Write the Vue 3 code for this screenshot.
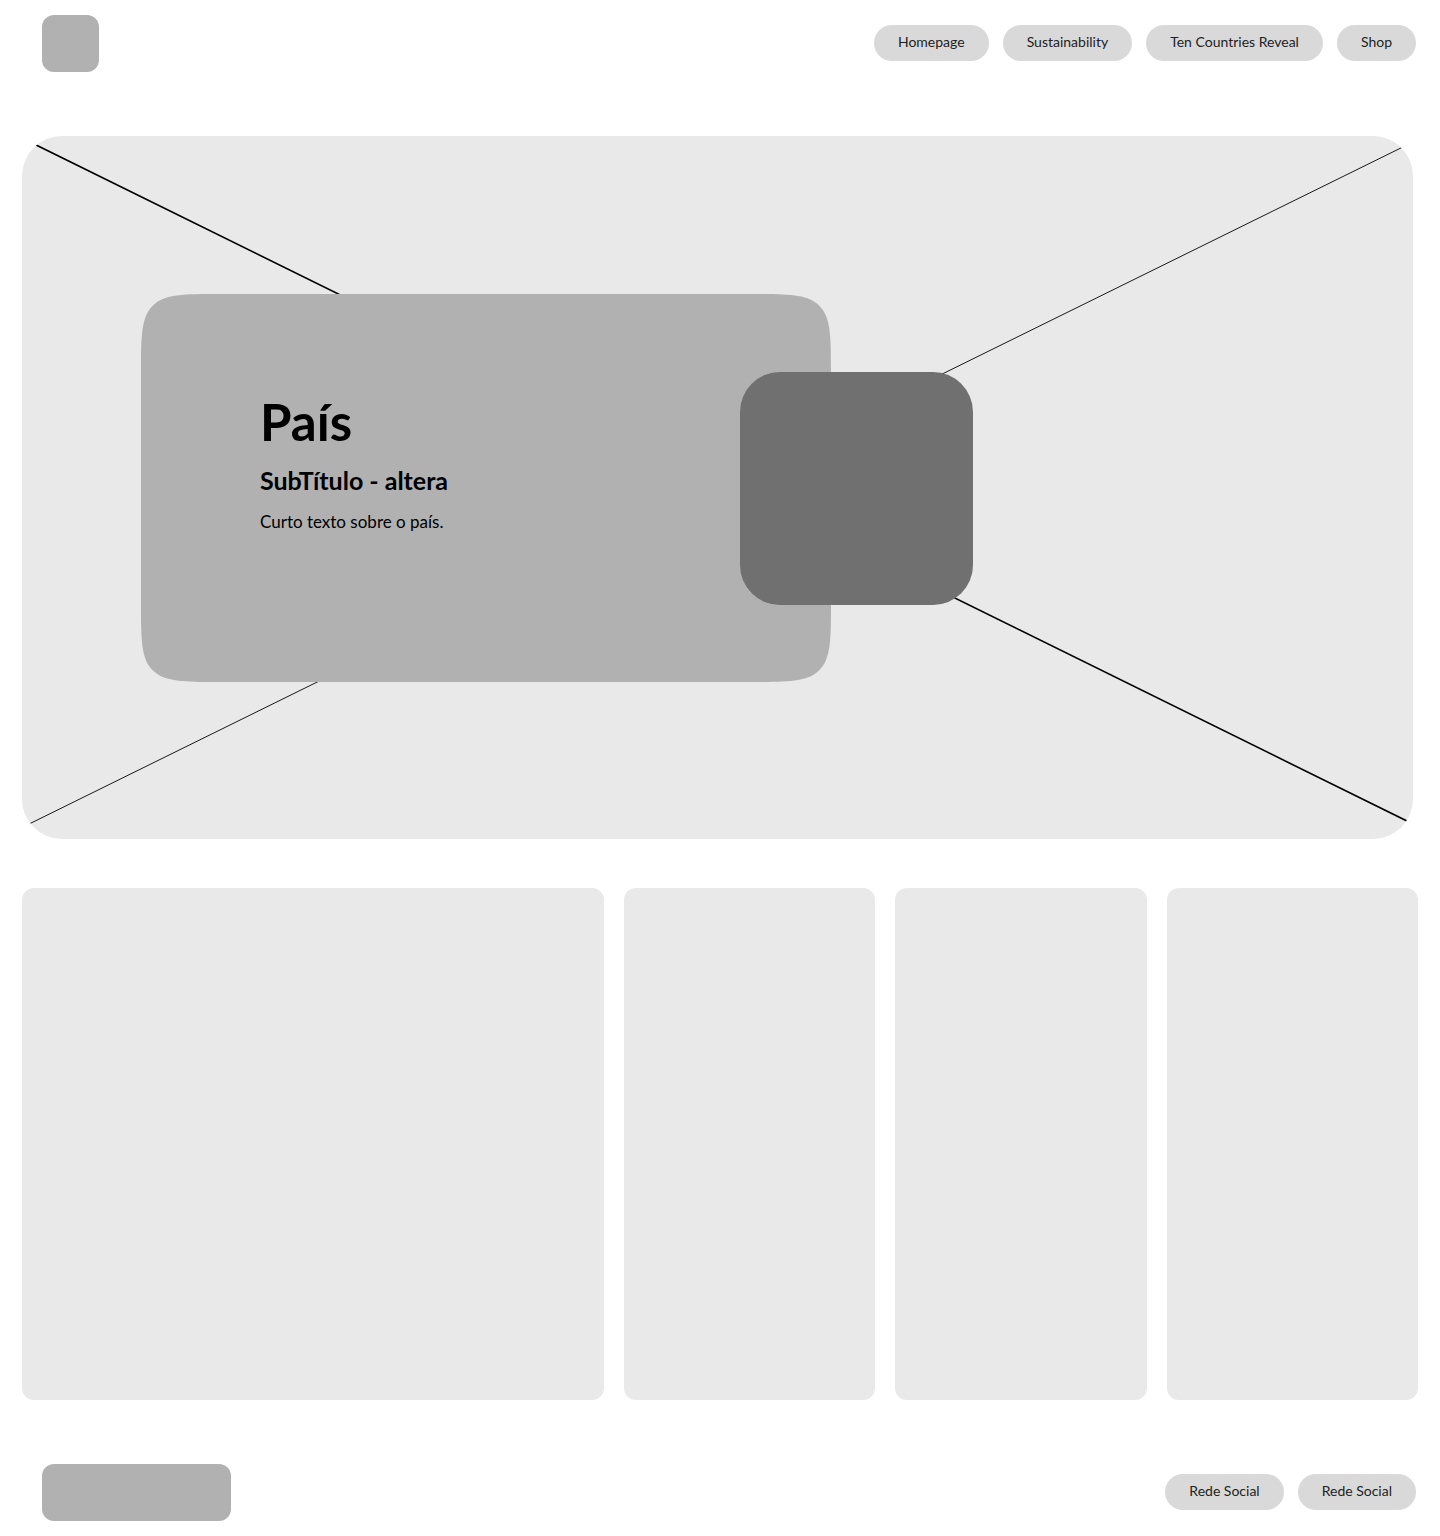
<script setup>
const pages = ['Homepage', 'Sustainability', 'Ten Countries Reveal', 'Shop']
const socials = ['Rede Social', 'Rede Social']
</script>

<template>
  <div class="page">
    <header class="bar header">
      <div class="logo"></div>
      <nav class="links" aria-label="Principal">
        <a v-for="page in pages" :key="page" class="pill" href="#">{{ page }}</a>
      </nav>
    </header>

    <main>
      <section class="hero">
        <svg class="cross" viewBox="0 0 1391 703" preserveAspectRatio="none" aria-hidden="true">
          <line x1="0" y1="2" x2="1391" y2="688" stroke-width="1.6" />
          <line x1="0" y1="691.5" x2="1391" y2="6" stroke-width="0.9" />
        </svg>
        <div class="panel">
          <svg class="shape" viewBox="0 0 690 388" preserveAspectRatio="none" aria-hidden="true">
            <path
              d="M0 80C0 42.3 0 23.4 11.7 11.7C23.4 0 42.3 0 80 0H610C647.7 0 666.6 0 678.3 11.7C690 23.4 690 42.3 690 80V308C690 345.7 690 364.6 678.3 376.3C666.6 388 647.7 388 610 388H80C42.3 388 23.4 388 11.7 376.3C0 364.6 0 345.7 0 308Z"
            />
          </svg>
          <div class="copy">
            <h1>País</h1>
            <h2>SubTítulo - altera</h2>
            <p>Curto texto sobre o país.</p>
          </div>
        </div>
        <div class="tile"></div>
      </section>

      <section class="cards">
        <div v-for="n in 4" :key="n" class="card"></div>
      </section>
    </main>

    <footer class="bar footer">
      <div class="logo wide"></div>
      <nav class="links" aria-label="Redes sociais">
        <a v-for="(social, i) in socials" :key="i" class="pill" href="#">{{ social }}</a>
      </nav>
    </footer>
  </div>
</template>

<style>
body {
  margin: 0;
  background: #fff;
}
</style>

<style scoped>
.page {
  font-family: Avenir, Lato, sans-serif;
  color: #000;
}

.bar {
  display: flex;
  align-items: flex-start;
  justify-content: space-between;
  padding: 15px 24px 15px 42px;
}

.header {
  margin-bottom: 49px;
}

.footer {
  margin-top: 49px;
}

.logo {
  width: 57px;
  height: 57px;
  border-radius: 12px;
  background: #b1b1b1;
}

.logo.wide {
  width: 189px;
}

.links {
  display: flex;
  gap: 14px;
  margin-top: 10px;
}

.pill {
  padding: 0 24px 2px;
  border-radius: 18px;
  background: #d9d9d9;
  color: #222;
  font-size: 14px;
  line-height: 34px;
  text-decoration: none;
  white-space: nowrap;
}

.hero {
  position: relative;
  display: flex;
  align-items: center;
  box-sizing: border-box;
  aspect-ratio: 1391 / 703;
  margin: 0 27px 0 22px;
  padding-left: 119px;
  overflow: hidden;
  border-radius: 40px;
  background: #e9e9e9;
}

.cross {
  position: absolute;
  inset: 0;
  width: 100%;
  height: 100%;
  stroke: #000;
}

.panel {
  position: relative;
  display: flex;
  align-items: center;
  box-sizing: border-box;
  width: 690px;
  height: 388px;
  padding-left: 119px;
}

.shape {
  position: absolute;
  inset: 0;
  width: 100%;
  height: 100%;
  fill: #b1b1b1;
}

.copy {
  position: relative;
  padding-bottom: 50px;
}

h1,
h2,
p {
  margin: 0;
}

h1 {
  font-size: 51px;
  font-weight: 700;
  line-height: 60px;
}

h2 {
  margin-top: 12px;
  font-size: 25px;
  font-weight: 700;
  line-height: 32px;
}

p {
  margin-top: 14px;
  font-size: 17px;
  line-height: 24px;
}

.tile {
  position: relative;
  width: 233px;
  height: 233px;
  margin-top: 2px;
  margin-left: -91px;
  border-radius: 40px;
  background: #707070;
}

.cards {
  display: grid;
  grid-template-columns: 1746fr 754fr 754fr 754fr;
  gap: 20px;
  margin: 49px 22px 0;
}

.card {
  height: 512px;
  border-radius: 12px;
  background: #e9e9e9;
}
</style>
